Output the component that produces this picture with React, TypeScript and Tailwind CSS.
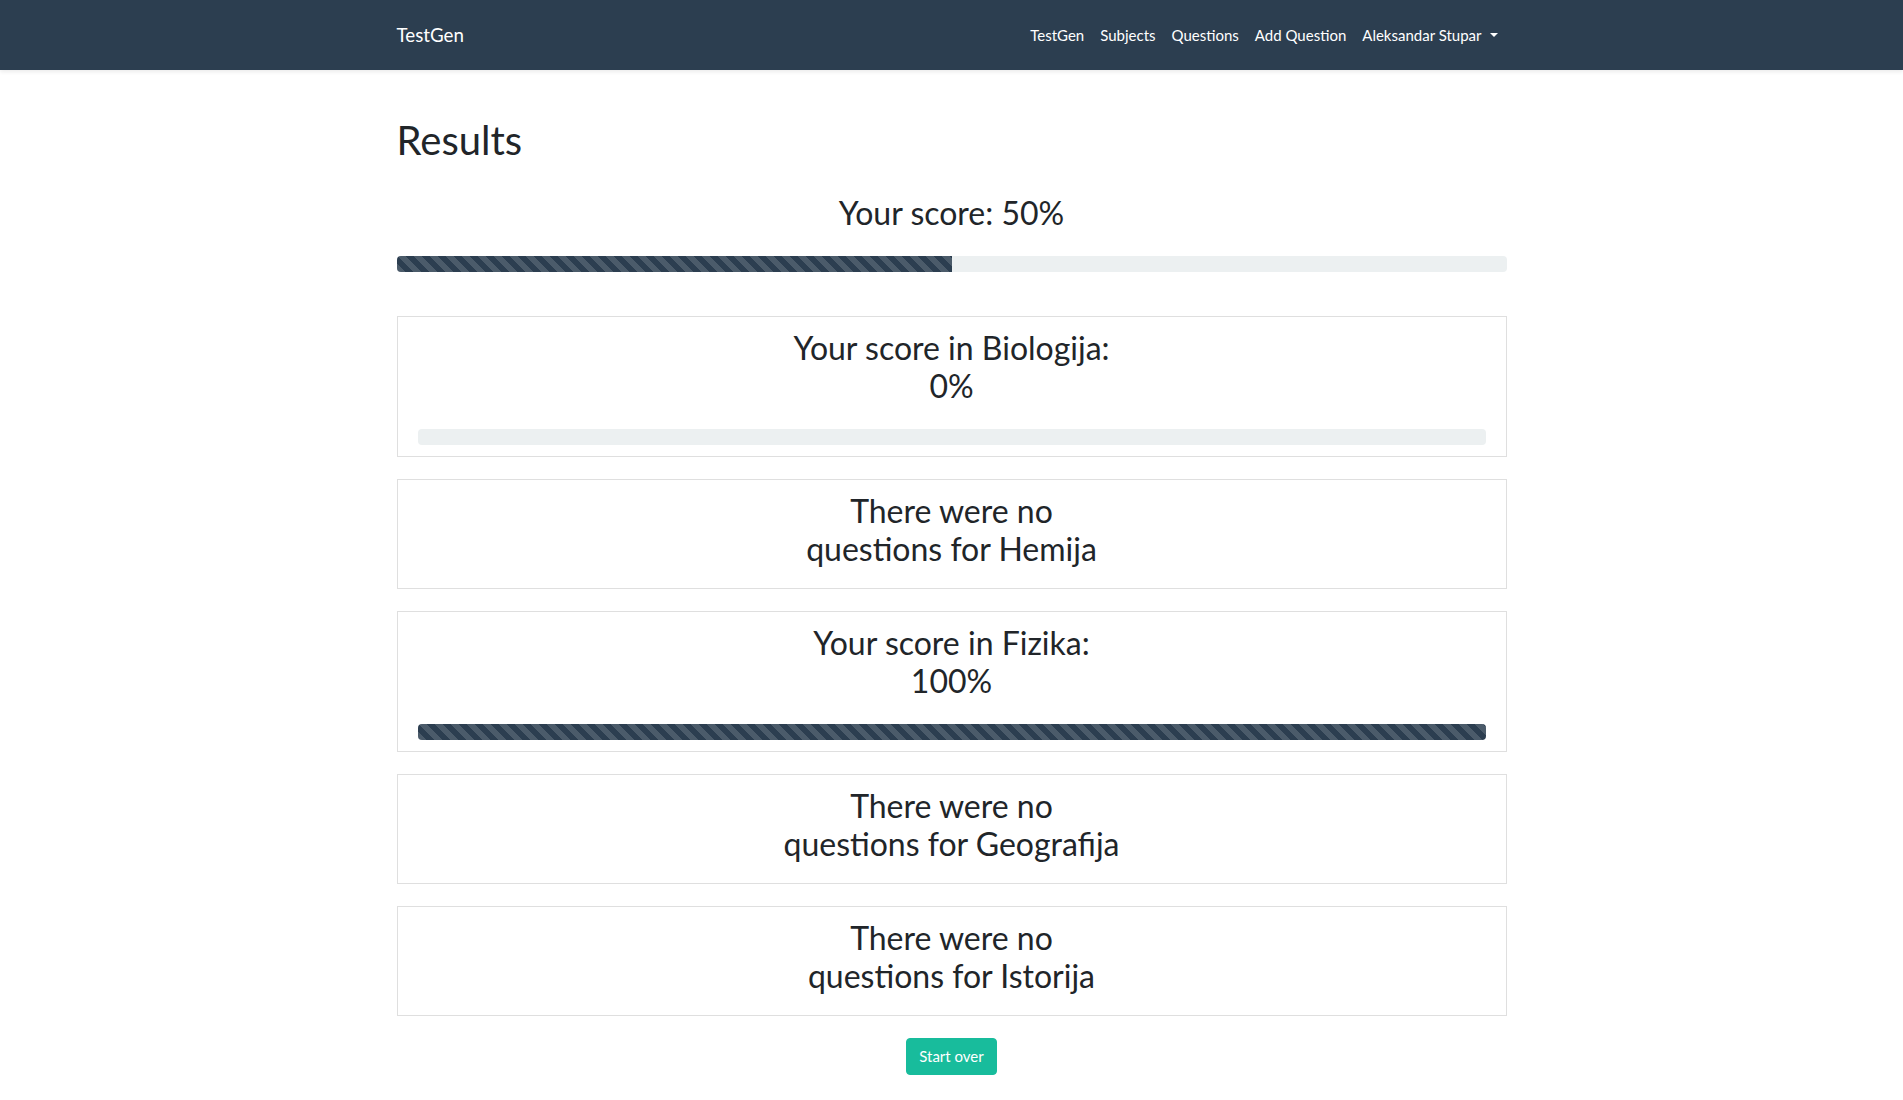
import React from "react";

type SubjectResult = {
  name: string;
  score: number | null;
};

const subjects: SubjectResult[] = [
  { name: "Biologija", score: 0 },
  { name: "Hemija", score: null },
  { name: "Fizika", score: 100 },
  { name: "Geografija", score: null },
  { name: "Istorija", score: null },
];

const ProgressBar = ({ value }: { value: number }) => (
  <div className="w-full h-4 bg-[#ecf0f1] rounded-[4px] overflow-hidden flex">
    <div
      className="h-full bg-[#2c3e50] bg-[linear-gradient(45deg,rgba(255,255,255,.15)_25%,transparent_25%,transparent_50%,rgba(255,255,255,.15)_50%,rgba(255,255,255,.15)_75%,transparent_75%,transparent)] bg-[length:16px_16px]"
      style={{ width: `${value}%` }}
    />
  </div>
);

const App = () => {
  return (
    <div className="min-h-screen bg-white text-[#212529] font-['Lato','Noto_Sans',sans-serif] text-[15px]">
      {/* Navbar */}
      <nav className="h-[70px] bg-[#2c3e50] shadow-[0_2px_4px_rgba(0,0,0,0.08)]">
        <div className="w-[1110px] mx-auto h-full flex items-center justify-between">
          <a className="text-white text-[18.75px] leading-[30px]">TestGen</a>
          <ul className="flex items-center text-white text-[15px]">
            <li className="px-2">TestGen</li>
            <li className="px-2">Subjects</li>
            <li className="px-2">Questions</li>
            <li className="px-2">Add Question</li>
            <li className="pl-2 pr-[9px] flex items-center">
              Aleksandar Stupar
              <span className="ml-[8px] w-0 h-0 border-l-[4.5px] border-r-[4.5px] border-t-[4.5px] border-l-transparent border-r-transparent border-t-white" />
            </li>
          </ul>
        </div>
      </nav>

      {/* Content */}
      <main className="w-[1110px] mx-auto pt-[46px] pb-10">
        <h1 className="text-[40px] leading-[48px] font-normal">Results</h1>

        <h3 className="mt-[30px] text-[32px] leading-[38.4px] font-normal text-center">
          Your score: 50%
        </h3>
        <div className="mt-[24px]">
          <ProgressBar value={50} />
        </div>

        <div className="mt-[44px] flex flex-col gap-[22px]">
          {subjects.map((s) =>
            s.score !== null ? (
              <div key={s.name} className="border border-[#dfdfdf] px-5 pt-[12px] pb-[11px]">
                <h3 className="w-[340px] mx-auto text-center text-[32px] leading-[38px] font-normal">
                  Your score in {s.name}: {s.score}%
                </h3>
                <div className="mt-[24px]">
                  <ProgressBar value={s.score} />
                </div>
              </div>
            ) : (
              <div key={s.name} className="border border-[#dfdfdf] px-5 pt-[12px] pb-[20px]">
                <h3 className="w-[340px] mx-auto text-center text-[32px] leading-[38px] font-normal">
                  There were no questions for {s.name}
                </h3>
              </div>
            )
          )}
        </div>

        <div className="mt-[22px] flex justify-center">
          <button className="bg-[#18bc9c] text-white text-[15px] leading-[22.5px] px-3 py-[6px] rounded-[4px] border border-[#18bc9c]">
            Start over
          </button>
        </div>
      </main>
    </div>
  );
};

export default App;
